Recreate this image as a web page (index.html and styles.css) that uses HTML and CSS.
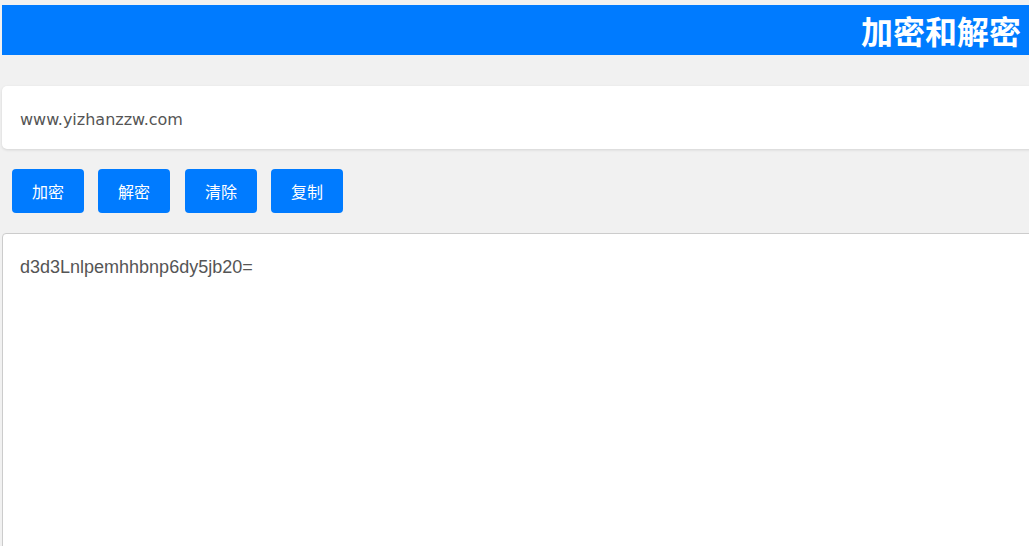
FILE: index.html
```html
<!DOCTYPE html>
<html lang="zh">
<head>
<meta charset="utf-8">
<title>加密和解密</title>
<link rel="stylesheet" href="styles.css">
</head>
<body>
<div class="page">
  <header class="topbar"><h1 class="title">加密和解密</h1></header>
  <div class="input-box">www.yizhanzzw.com</div>
  <div class="actions">
    <button class="btn">加密</button>
    <button class="btn">解密</button>
    <button class="btn">清除</button>
    <button class="btn">复制</button>
  </div>
  <div class="output-box">d3d3Lnlpemhhbnp6dy5jb20=</div>
</div>
</body>
</html>
```
FILE: styles.css
```css
html, body {
  margin: 0;
  padding: 0;
  background: #f1f1f1;
  overflow: hidden;
  height: 546px;
}
.page {
  width: 1027px;
  margin-left: 2px;
  padding-top: 5px;
  font-family: "Liberation Sans", "Noto Sans CJK SC", sans-serif;
}
.topbar {
  background: #007bff;
  height: 50px;
  display: flex;
  justify-content: flex-end;
  align-items: center;
  padding-right: 8px;
}
.title {
  margin: 0;
  color: #fff;
  font-size: 32px;
  font-weight: bold;
  font-family: "Noto Sans CJK SC", sans-serif;
  line-height: 1;
}
.input-box {
  margin-top: 31px;
  height: 63px;
  width: 1060px;
  background: #fff;
  border-radius: 5px;
  box-shadow: 0 1px 3px rgba(0,0,0,0.12);
  box-sizing: border-box;
  padding-left: 18px;
  padding-top: 3px;
  display: flex;
  align-items: center;
  font-family: "DejaVu Sans", sans-serif;
  font-size: 16px;
  color: #555;
}
.actions {
  display: flex;
  gap: 14px;
  margin-top: 20px;
  padding-left: 10px;
}
.btn {
  width: 72px;
  height: 44px;
  border: none;
  border-radius: 4px;
  background: #007bff;
  color: #fff;
  font-size: 16px;
  font-family: "Noto Sans CJK SC", sans-serif;
  padding: 0;
}
.actions .btn:nth-child(3) { margin-left: 1px; }
.output-box {
  margin-top: 20px;
  width: 1060px;
  height: 340px;
  background: #fff;
  border: 1px solid #ccc;
  border-radius: 4px;
  box-sizing: border-box;
  padding: 23px 17px;
  font-size: 18px;
  color: #555;
}
```
